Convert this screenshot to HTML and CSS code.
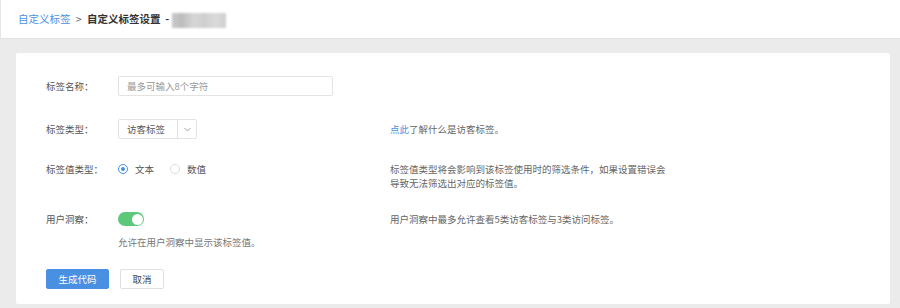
FILE: index.html
```html
<!DOCTYPE html>
<html lang="zh">
<head>
    <meta charset="UTF-8">
    <meta name="viewport" content="width=device-width, initial-scale=1.0">
    <title>自定义标签设置</title>
    <link rel="stylesheet" href="styles.css">
</head>
<body>
    <div class="header">
        <a href="#" class="crumb-link">自定义标签</a>
        <span class="crumb-sep">&gt;</span>
        <span class="crumb-title">自定义标签设置 &nbsp;- </span><span class="crumb-mask"></span>
    </div>

    <div class="main">
        <div class="card">
            <div class="form-row row-name">
                <div class="form-label">标签名称：</div>
                <div class="form-control">
                    <input type="text" class="text-input" placeholder="最多可输入8个字符">
                </div>
            </div>

            <div class="form-row row-type">
                <div class="form-label">标签类型：</div>
                <div class="form-control">
                    <div class="select-box">
                        <span class="select-value">访客标签</span>
                        <span class="select-arrow">
                            <svg width="7" height="5" viewBox="0 0 7 5"><path d="M0.5 1 L3.5 4 L6.5 1" fill="none" stroke="#999" stroke-width="0.9"/></svg>
                        </span>
                    </div>
                </div>
                <div class="form-desc"><a href="#" class="link">点此</a>了解什么是访客标签。</div>
            </div>

            <div class="form-row row-value">
                <div class="form-label">标签值类型：</div>
                <div class="form-control">
                    <label class="radio checked"><span class="radio-dot"></span>文本</label>
                    <label class="radio"><span class="radio-dot"></span>数值</label>
                </div>
                <div class="form-desc">标签值类型将会影响到该标签使用时的筛选条件，如果设置错误会<br>导致无法筛选出对应的标签值。</div>
            </div>

            <div class="form-row row-insight">
                <div class="form-label">用户洞察：</div>
                <div class="form-control">
                    <span class="switch on"><span class="switch-knob"></span></span>
                </div>
                <div class="form-desc">用户洞察中最多允许查看5类访客标签与3类访问标签。</div>
            </div>
            <div class="form-help">允许在用户洞察中显示该标签值。</div>

            <div class="form-actions">
                <button class="btn btn-primary">生成代码</button>
                <button class="btn">取消</button>
            </div>
        </div>
    </div>
</body>
</html>
```

FILE: styles.css
```css
body {
    margin: 0;
    padding: 0;
    font-family: 'Noto Sans CJK SC', 'Liberation Sans', sans-serif;
    font-size: 9.5px;
    color: #555;
    background-color: #ebebeb;
}

/* 顶部面包屑 */
.header {
    height: 38px;
    line-height: 38px;
    padding-left: 17px;
    background-color: #fff;
    border-left: 1px solid #e6e6e6;
    font-size: 10.5px;
    white-space: nowrap;
}

.crumb-link {
    color: #4a90e2;
    text-decoration: none;
}

.crumb-sep {
    color: #555;
    margin: 0 3px;
}

.crumb-title {
    color: #333;
    font-weight: bold;
}

.crumb-mask {
    display: inline-block;
    width: 54px;
    height: 15px;
    vertical-align: middle;
    background: linear-gradient(90deg, #c8c8c8 0, #bdbdbd 18%, #d6d6d6 40%, #cfcfcf 60%, #dadada 80%, #d0d0d0 100%);
    filter: blur(1px);
}

/* 主体 */
.main {
    border-top: 1px solid #e2e2e2;
    padding: 14px 10px 4px 16px;
}

.card {
    background-color: #fff;
    border-radius: 2px;
    padding: 23px 0 15px 30px;
}

.form-row {
    display: flex;
    align-items: flex-start;
}

.form-label {
    width: 72px;
    flex-shrink: 0;
    color: #555;
}

.form-control {
    width: 272px;
    flex-shrink: 0;
    display: flex;
    align-items: center;
}

.form-desc {
    color: #666;
    line-height: 14px;
}

.row-name .form-label,
.row-type .form-label {
    line-height: 20px;
}

.row-type {
    margin-top: 23px;
}

.row-type .form-desc {
    line-height: 20px;
}

.row-value {
    margin-top: 23px;
    line-height: 14px;
}

.row-value .form-control {
    height: 14px;
}

.row-insight {
    margin-top: 22px;
    line-height: 14px;
}

.row-insight .form-control {
    height: 14px;
}

.link {
    color: #4a90e2;
    text-decoration: none;
}

.text-input {
    box-sizing: border-box;
    width: 215px;
    height: 20px;
    padding: 0 8px;
    border: 1px solid #e3e3e3;
    border-radius: 2px;
    font-family: inherit;
    font-size: 9.5px;
    color: #555;
    outline: none;
}

.text-input::placeholder {
    color: #999;
}

.select-box {
    box-sizing: border-box;
    width: 79px;
    height: 20px;
    display: flex;
    border: 1px solid #e3e3e3;
    border-radius: 2px;
    line-height: 18px;
}

.select-value {
    flex: 1;
    padding-left: 8px;
    color: #555;
}

.select-arrow {
    width: 18px;
    border-left: 1px solid #e3e3e3;
    display: flex;
    align-items: center;
    justify-content: center;
}

/* 单选 */
.radio {
    display: flex;
    align-items: center;
    margin-right: 16px;
    color: #555;
}

.radio-dot {
    box-sizing: border-box;
    width: 10px;
    height: 10px;
    border: 1px solid #ddd;
    border-radius: 50%;
    margin-right: 7px;
    position: relative;
}

.radio.checked .radio-dot {
    border-color: #4a90e2;
}

.radio.checked .radio-dot::after {
    content: '';
    position: absolute;
    top: 2px;
    left: 2px;
    width: 4px;
    height: 4px;
    border-radius: 50%;
    background-color: #4a90e2;
}

/* 开关 */
.switch {
    box-sizing: border-box;
    width: 26px;
    height: 14px;
    border-radius: 7px;
    background-color: #5cc97a;
    display: flex;
    align-items: center;
    justify-content: flex-end;
    padding: 0 1.5px;
}

.switch-knob {
    width: 11px;
    height: 11px;
    border-radius: 50%;
    background-color: #fff;
}

.form-help {
    margin: 9px 0 0 72px;
    line-height: 14px;
    color: #777;
}

.form-actions {
    display: flex;
    gap: 11px;
    margin-top: 20px;
}

.btn {
    height: 20px;
    padding: 0;
    width: 44px;
    border: 1px solid #e0e0e0;
    border-radius: 2px;
    background-color: #fff;
    font-family: inherit;
    font-size: 9.5px;
    color: #444;
}

.btn-primary {
    width: 63px;
    border-color: #4a90e2;
    background-color: #4a90e2;
    color: #fff;
}
```
